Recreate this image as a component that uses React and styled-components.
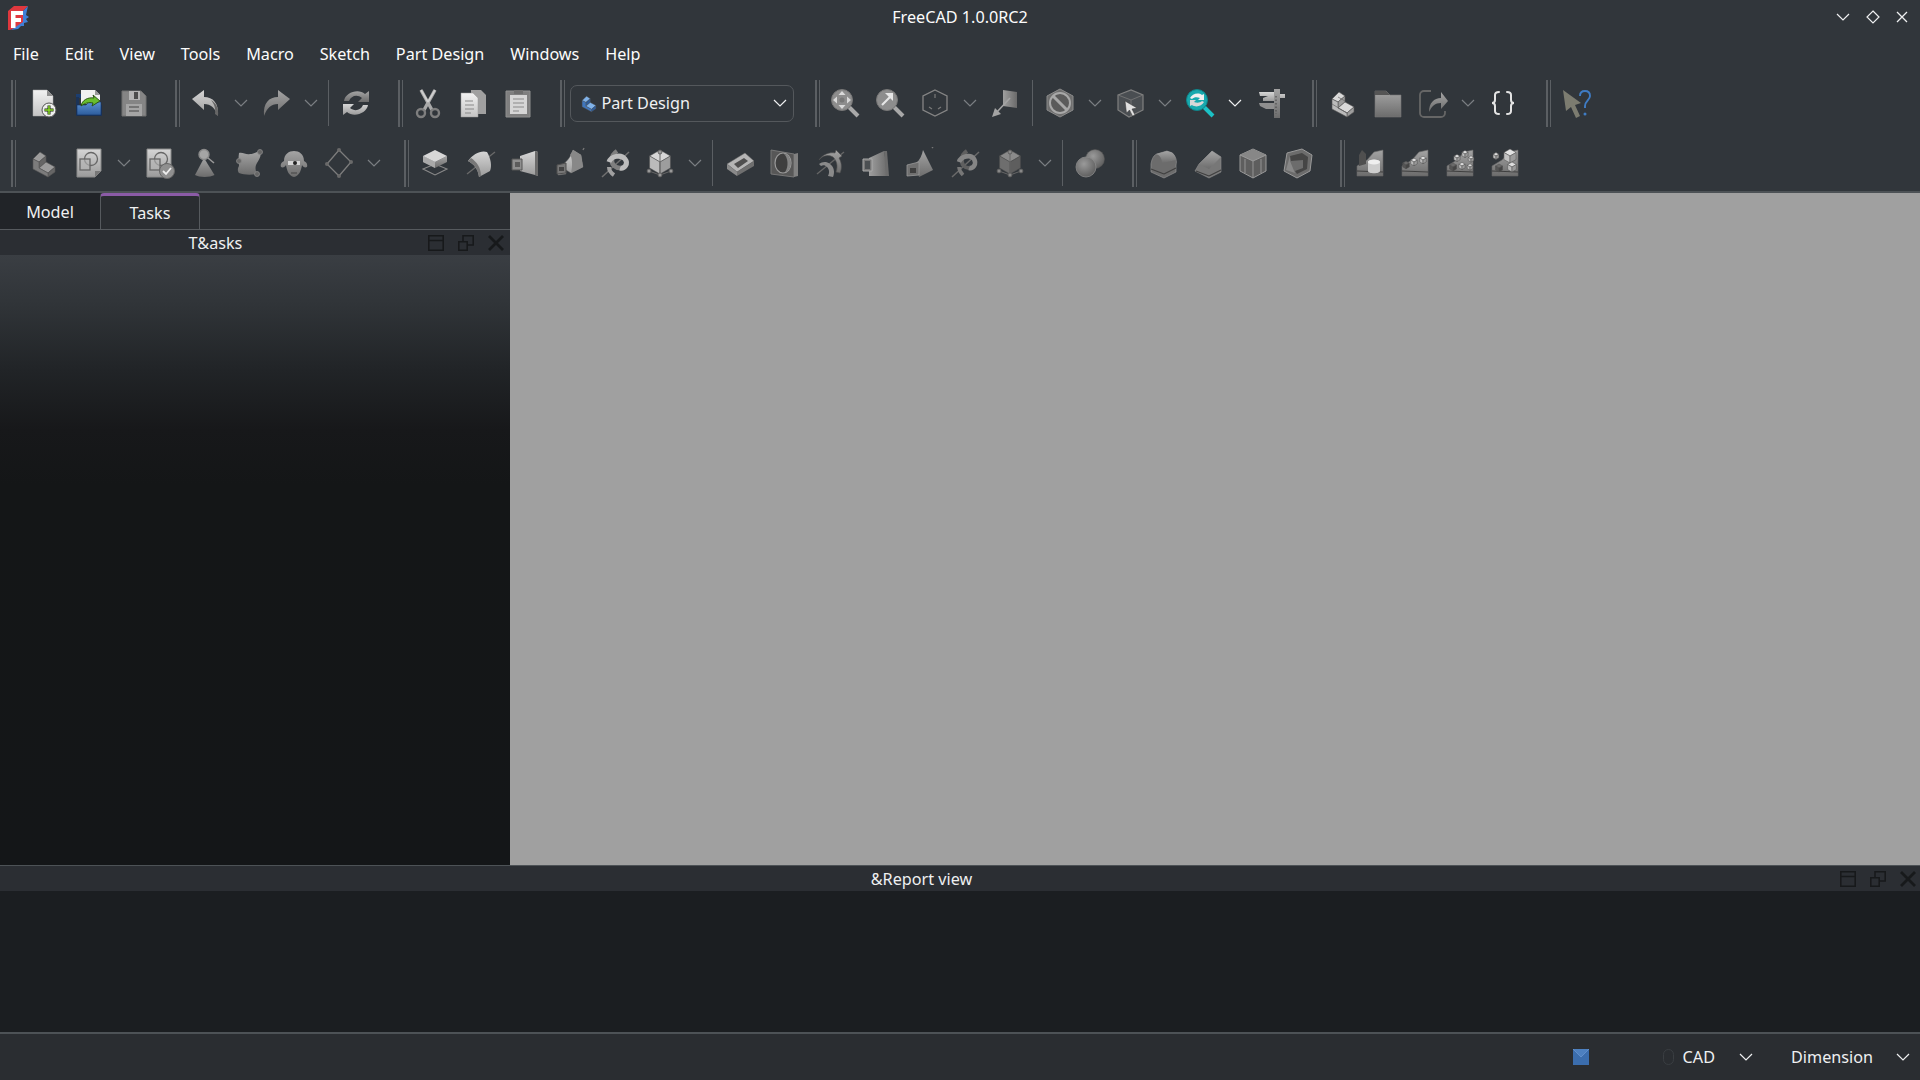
import React from "react";
import styled, { createGlobalStyle } from "styled-components";

const GlobalStyle = createGlobalStyle`
    html, body {
        margin: 0;
        width: 1920px;
        height: 1080px;
        overflow: hidden;
        background: #31363b;
    }
    body, button {
        font-family: "Noto Sans", "Open Sans", sans-serif;
        font-size: 16.2px;
        color: #eff0f1;
    }
`;

const AppWindow = styled.div`
    display: flex;
    flex-direction: column;
    width: 1920px;
    height: 1080px;
    background: #31363b;
`;

const TitleBar = styled.div`
    display: grid;
    grid-template-columns: 1fr auto 1fr;
    align-items: center;
    height: 34px;
    flex: none;
`;

const Logo = styled.svg`
    display: block;
    margin: 2px 0 0 6px;
`;

const WindowButtons = styled.div`
    display: flex;
    justify-content: flex-end;
    align-items: center;
    gap: 16px;
    padding-right: 12px;
    color: #eff0f1;
`;

const Title = styled.div`
    color: #fcfcfc;
`;

const MenuBar = styled.div`
    display: flex;
    align-items: center;
    height: 39px;
    flex: none;
`;

const MenuItem = styled.div`
    padding: 0 12.95px;
    color: #fcfcfc;
`;

const ToolArea = styled.div`
    flex: none;
    height: 120px;
    border-bottom: 2px solid #4d5256;
    box-sizing: border-box;
`;

const ToolRow = styled.div`
    display: flex;
    align-items: center;
    height: ${(p) => p.$height}px;
    padding-left: 11px;
    box-sizing: border-box;
    padding-top: ${(p) => p.$top || 0}px;
`;

const Grip = styled.div`
    flex: none;
    box-sizing: border-box;
    width: 5px;
    height: 47px;
    margin: 0 ${(p) => p.$mr}px 0 ${(p) => p.$ml}px;
    border-left: 2px solid #5b5f63;
    border-right: 1px solid #5b5f63;
`;

const ThinSep = styled.div`
    flex: none;
    width: 1px;
    height: 46px;
    margin: 0 4.5px;
    background: #5b5f63;
`;

const ToolButton = styled.div`
    flex: none;
    display: flex;
    justify-content: center;
    align-items: center;
    width: 45px;
    height: 45px;
`;

const ArrowButton = styled.div`
    flex: none;
    display: flex;
    justify-content: center;
    align-items: center;
    width: 25px;
    color: ${(p) => (p.$bright ? "#eff0f1" : "#7b7f83")};
`;

const Combo = styled.div`
    flex: none;
    display: flex;
    align-items: center;
    box-sizing: border-box;
    width: 224px;
    height: 37px;
    padding: 0 6px 0 8px;
    gap: 3px;
    border: 1px solid #54585c;
    border-radius: 7px;
`;

const ComboLabel = styled.span`
    flex: 1;
`;

const Main = styled.div`
    display: flex;
    flex: none;
    height: 672px;
`;

const LeftPanel = styled.div`
    display: flex;
    flex-direction: column;
    flex: none;
    width: 510px;
    background: #2a2d31;
`;

const TabBar = styled.div`
    display: flex;
    flex: none;
    height: 37px;
    box-sizing: border-box;
    border-bottom: 1px solid #565a5e;
`;

const Tab = styled.div`
    display: flex;
    justify-content: center;
    align-items: center;
    box-sizing: border-box;
    width: 100px;
    height: 36px;
    padding-top: ${(p) => (p.$active ? 0 : 2)}px;
    background: ${(p) => (p.$active ? "#2a2d31" : "#212428")};
    ${(p) =>
        p.$active &&
        `border: 1px solid #565a5e;
         border-top: 3px solid #8b5ba6;
         border-bottom: none;
         border-radius: 4px 4px 0 0;`}
`;

const DockHeader = styled.div`
    display: flex;
    align-items: center;
    flex: none;
    height: 25px;
    background: #2b2e33;
`;

const DockTitle = styled.div`
    flex: 1;
    padding-left: 3px;
    text-align: center;
`;

const DockButtons = styled.div`
    display: flex;
    align-items: center;
    gap: 14px;
    padding-right: ${(p) => p.$inset}px;
    color: #17191b;
`;

const TaskBody = styled.div`
    flex: 1;
    background: linear-gradient(#3a3e43 0, #303438 50px, #212427 115px, #17181a 175px, #141617 230px, #141618 100%);
`;

const Viewport = styled.div`
    flex: 1;
    background: #a0a0a0;
`;

const ReportBody = styled.div`
    flex: none;
    height: 141px;
    background: #1b1e21;
`;

const ReportPanel = styled.div`
    flex: none;
    border-top: 1px solid #4d5256;
`;

const StatusBar = styled.div`
    display: flex;
    align-items: center;
    justify-content: flex-end;
    flex: 1;
    padding-right: 10px;
    background: #2a2d31;
    border-top: 2px solid #4d5256;
    color: #eff0f1;
`;

const StatusSwatch = styled.svg`
    display: block;
    margin-right: 74px;
`;

const MouseIcon = styled.div`
    width: 11px;
    height: 16px;
    margin-right: 9px;
    box-sizing: border-box;
    border: 1px solid #3a3e42;
    border-radius: 6px;
`;

const StatusChevron = styled.div`
    display: flex;
    justify-content: center;
    width: 14px;
    margin: 0 ${(p) => p.$right}px 0 ${(p) => p.$left}px;
`;

const Chevron = () => (
    <svg width="14" height="8" viewBox="0 0 14 8" fill="none" stroke="currentColor" strokeWidth="1.2">
        <path d="M1 1l6 6 6-6" />
    </svg>
);

const Defs = styled.svg`
    display: block;
    width: 0;
    height: 0;
`;

const grad = (id, a, b, horizontal) => (
    <linearGradient id={id} x1="0" y1="0" x2={horizontal ? "1" : "0"} y2={horizontal ? "0" : "1"}>
        <stop offset="0" stopColor={a} />
        <stop offset="1" stopColor={b} />
    </linearGradient>
);

const SharedDefs = () => (
    <Defs>
        <defs>
            {grad("gw", "#f2f2f2", "#c4c4c4")}
            {grad("gl", "#d6d6d6", "#9a9a9a")}
            {grad("gm", "#a4a4a4", "#6c6c6c")}
            {grad("gd", "#7c7c7c", "#4e4e4e")}
            {grad("gh", "#9f9f9f", "#6a6a6a", true)}
            {grad("gb", "#5d92d2", "#2c5c9c")}
            <radialGradient id="gs" cx="0.4" cy="0.35" r="0.7">
                <stop offset="0" stopColor="#9a9a9a" />
                <stop offset="1" stopColor="#5c5c5c" />
            </radialGradient>
        </defs>
    </Defs>
);

const I = ({ children, size = 32 }) => (
    <svg width={size} height={size} viewBox="0 0 32 32" fill="none">
        {children}
    </svg>
);

const cube = (cx, cy, s, top = "#cfcfcf", left = "#9b9b9b", right = "#737373") => {
    const w = s * 0.87;
    const h = s / 2;
    return (
        <g stroke="#4f4f4f" strokeWidth="0.5">
            <path d={`M${cx} ${cy - s}L${cx + w} ${cy - h}L${cx} ${cy}L${cx - w} ${cy - h}z`} fill={top} />
            <path d={`M${cx - w} ${cy - h}L${cx} ${cy}V${cy + s}L${cx - w} ${cy + h}z`} fill={left} />
            <path d={`M${cx} ${cy}L${cx + w} ${cy - h}V${cy + h}L${cx} ${cy + s}z`} fill={right} />
        </g>
    );
};

const stairs = (top, left, right) => (
    <g stroke="#555" strokeWidth="0.6" strokeLinejoin="round">
        <path d="M5 12l7-7 6 4-7 6z" fill={top} />
        <path d="M11 15l7-6v6l-7 6z" fill={right} />
        <path d="M11 21l7-6 9 5-7 6z" fill={top} />
        <path d="M20 26l7-6v5l-7 5z" fill={right} />
        <path d="M5 12l6 3v6l9 5v4L5 22z" fill={left} />
    </g>
);

const sketchPage = (
    <g>
        <path d="M4 2h24v22l-6 6H4z" fill="url(#gl)" stroke="#8a8a8a" />
        <path d="M22 30v-6h6z" fill="#777" />
        <circle cx="18" cy="12" r="6.5" stroke="#666" strokeWidth="1.3" />
        <rect x="7" y="12" width="10" height="11" fill="#b4b4b4" fillOpacity="0.6" stroke="#666" strokeWidth="1.3" />
    </g>
);

const pointedCube = (top, left, right, dot) => (
    <g>
        {cube(16, 15, 12, top, left, right)}
        <path d="M16 5v21M5 24l11 4 11-4" stroke="#666" strokeWidth="1" />
        <g fill={dot} stroke="#555" strokeWidth="0.8">
            <circle cx="16" cy="5" r="2" />
            <circle cx="5" cy="24" r="2" />
            <circle cx="16" cy="28" r="2" />
            <circle cx="27" cy="24" r="2" />
        </g>
    </g>
);

const ramp = (
    <g>
        <path d="M3 19L13 13 20 5 29 3V29H3z" fill="url(#gm)" stroke="#666" strokeWidth="0.6" />
        <path d="M3 24l26 1" stroke="#3f3f3f" strokeWidth="1" />
    </g>
);

const icons = {
    new: (
        <I>
            <path d="M5 3h14l6 6v20H5z" fill="url(#gw)" stroke="#aaa" strokeWidth="0.5" />
            <path d="M19 3v6h6z" fill="#8f8f8f" />
            <circle cx="21" cy="23" r="7" fill="#eee" stroke="#555" />
            <path d="M21 18.5v9M16.5 23h9" stroke="#1d2a10" strokeWidth="3" />
            <path d="M21 18.8v8.4M16.8 23h8.4" stroke="#8bdc2a" strokeWidth="1.5" />
        </I>
    ),
    open: (
        <I>
            <path d="M3 7h5v4H3z" fill="#1c3e70" />
            <path d="M8 3h14l5 5v9H8z" fill="#f1f1f1" />
            <path d="M22 3v5h5z" fill="#9a9a9a" />
            <path d="M3 10h3v8h23v-8v19H3z" fill="#1c3356" />
            <path d="M4 18h9l3-3h12v13H4z" fill="url(#gb)" stroke="#15305a" strokeWidth="0.6" />
            <path d="M8 19c1-6 7-9 13-8l-1-3 7 6-8 5 1-3c-4-1-8 0-12 3z" fill="#69bd2e" stroke="#244d10" strokeWidth="0.9" />
        </I>
    ),
    save: (
        <I>
            <path d="M4 4h19l5 5v20H4z" fill="#858585" stroke="#707070" />
            <path d="M11 4h11v9H11z" fill="#b5b5b5" />
            <path d="M16 5h4v7h-4z" fill="#4d4d4d" />
            <path d="M8 17h16v12H8z" fill="#a5a5a5" />
            <path d="M11 20h10M11 24h10" stroke="#666" strokeWidth="1.4" />
        </I>
    ),
    undo: (
        <I>
            <path d="M2 12L14 3v7c9 0 15 6 14 19-3-8-7-12-14-12v6z" fill="url(#gl)" />
            <path d="M28 29c1-8-2-13-7-16 3 4 5 8 4 14z" fill="#666" />
        </I>
    ),
    redo: (
        <I>
            <g transform="matrix(-1 0 0 1 32 0)">
                <path d="M2 12L14 3v7c9 0 15 6 14 19-3-8-7-12-14-12v6z" fill="url(#gm)" />
            </g>
        </I>
    ),
    refresh: (
        <I>
            <path d="M4 14C5 6 18 1 25 7l4-3v11H18l4-4c-5-4-11-2-13 3z" fill="url(#gm)" />
            <path d="M28 18c-1 8-14 13-21 7l-4 3V17h11l-4 4c5 4 11 2 13-3z" fill="url(#gl)" />
        </I>
    ),
    cut: (
        <I>
            <path d="M9 3l11 20M23 3L12 23" stroke="#a9a9a9" strokeWidth="3.4" />
            <path d="M9 3l7 12M23 3l-7 12" stroke="#cfcfcf" strokeWidth="1.6" />
            <circle cx="9" cy="26" r="4" stroke="#7f7f7f" strokeWidth="2.4" />
            <circle cx="23" cy="26" r="4" stroke="#7f7f7f" strokeWidth="2.4" />
        </I>
    ),
    copy: (
        <I>
            <path d="M14 3h10l5 5v19H14z" fill="#a0a0a0" />
            <path d="M4 6h12l5 5v19H4z" fill="url(#gw)" stroke="#999" strokeWidth="0.5" />
            <path d="M8 14h8M8 18h9M8 22h9M8 26h6" stroke="#8a8a8a" strokeWidth="1.1" />
        </I>
    ),
    paste: (
        <I>
            <path d="M4 4h24v26H4z" fill="#7f7f7f" stroke="#8f8f8f" />
            <path d="M8 8h17v19H8z" fill="#d6d6d6" />
            <path d="M12 3h9v4h-9z" fill="#6d6d6d" />
            <path d="M11 12h11M11 16h11M11 20h11M11 24h6" stroke="#8a8a8a" strokeWidth="1.1" />
        </I>
    ),
    zoomfit: (
        <I>
            <path d="M20 20l9 9" stroke="#a8a8a8" strokeWidth="4" />
            <circle cx="13" cy="13" r="10.5" fill="#8d8d8d" stroke="#777" />
            <path d="M13 4l3.5 4h-7zM13 22l3.5-4h-7zM4 13l4-3.5v7zM22 13l-4-3.5v7z" fill="#d9d9d9" />
            <circle cx="13" cy="13" r="2.5" fill="#777" />
        </I>
    ),
    zoomsel: (
        <I>
            <path d="M20 20l9 9" stroke="#a8a8a8" strokeWidth="4" />
            <circle cx="13" cy="13" r="10.5" fill="#8d8d8d" stroke="#777" />
            <path d="M8 18L17 9" stroke="#e6e6e6" strokeWidth="2.2" />
            <path d="M19 6v8l-8-8z" fill="#e6e6e6" />
        </I>
    ),
    cubeview: (
        <I>
            <path d="M16 3l12 6v14l-12 6-12-6V9z" stroke="#858585" strokeWidth="1.3" />
            <path d="M16 7v4M10 20l3 2M22 20l-3 2" stroke="#7a7a7a" strokeWidth="1.2" />
        </I>
    ),
    plane: (
        <I>
            <path d="M14 3l14 2v16L14 19z" fill="url(#gh)" />
            <path d="M21 11L7 26" stroke="#a4a4a4" strokeWidth="1.6" />
            <path d="M3 30l9-3-6-6z" fill="#a4a4a4" />
        </I>
    ),
    noshade: (
        <I>
            <path d="M16 2l13 7v14l-13 7-13-7V9z" fill="#6f6f6f" stroke="#8b8b8b" />
            <circle cx="16" cy="16" r="10" fill="#5b5b5b" stroke="#a8a8a8" strokeWidth="2" />
            <path d="M9 9l14 14" stroke="#a8a8a8" strokeWidth="3" />
        </I>
    ),
    cubecursor: (
        <I>
            <path d="M4 8l13-5 12 5v15l-14 7-11-7z" fill="#4a4e52" stroke="#808080" strokeWidth="1.2" />
            <path d="M4 8l13 5 12-5M17 13v17" stroke="#747474" strokeWidth="0.9" />
            <path d="M11 14l12 7-5 1 3 6-2.500 1-3-6-3 3z" fill="#e0e0e0" stroke="#333" strokeWidth="0.5" />
        </I>
    ),
    teal: (
        <I>
            <path d="M20 20l9 9" stroke="#1cc1c5" strokeWidth="4" />
            <circle cx="13" cy="13" r="10.5" fill="#18a9ae" stroke="#0e8489" />
            <path d="M6 11c2-4 8-6 12-3l2-1v6h-6l2-2c-3-1-6-1-8 1z" fill="#f0f0f0" />
            <path d="M20 15c-2 4-8 6-12 3l-2 1v-6h6l-2 2c3 1 6 1 8-1z" fill="#d8d8d8" />
        </I>
    ),
    caliper: (
        <I>
            <path d="M5 5h20v2h6v4h-6v3H9v-3l5-2H6z" fill="url(#gl)" />
            <path d="M20 2h6v29h-6z" fill="url(#gm)" />
            <path d="M5 16h15v6H12l-6-3z" fill="#8f8f8f" />
            <path d="M22 9v18" stroke="#444" strokeWidth="1" strokeDasharray="1.5 2" />
        </I>
    ),
    stack: (
        <I>
            {stairs("#d9d9d9", "#bbb", "#9d9d9d")}
            <path d="M5 17l15 9M11 10l7 4" stroke="#666" strokeWidth="0.7" />
        </I>
    ),
    folder: (
        <I>
            <path d="M3 4h11l4 4h11v22H3z" fill="url(#gm)" stroke="#777" strokeWidth="0.6" />
            <path d="M3 4h11l4 4H3z" fill="#555" />
        </I>
    ),
    share: (
        <I>
            <path d="M14 4H7a4 4 0 0 0-4 4v18a4 4 0 0 0 4 4h17a4 4 0 0 0 4-4v-2" stroke="#666" strokeWidth="1.8" />
            <path d="M12 25c0-9 5-14 12-14V5l7 9-7 8v-6c-6 0-9 3-12 9z" fill="url(#gm)" />
        </I>
    ),
    braces: (
        <I>
            <g stroke="#e4e4e4" strokeWidth="2" strokeLinecap="round">
                <path d="M12 5c-3 0-4 1-4 3v5c0 2-1 3-3 3 2 0 3 1 3 3v5c0 2 1 3 4 3" />
                <path d="M20 5c3 0 4 1 4 3v5c0 2 1 3 3 3-2 0-3 1-3 3v5c0 2-1 3-4 3" />
            </g>
        </I>
    ),
    help: (
        <I>
            <path d="M3 3l18 13-6 2 5 11-4 2-5-11-5 4z" fill="#7c7c70" />
            <path d="M20 9c0-3 2-5 5-5s5 2 5 5c0 4-5 5-5 10v2" stroke="#3f7cc4" strokeWidth="1.9" />
            <circle cx="25" cy="27" r="1.5" fill="#3f7cc4" />
        </I>
    ),
    body: <I>{stairs("#9c9c9c", "#7c7c7c", "#666")}</I>,
    sketch: <I>{sketchPage}</I>,
    sketchok: (
        <I>
            {sketchPage}
            <circle cx="24" cy="24" r="7.5" fill="#8f8f8f" stroke="#666" />
            <path d="M20 24l3 3 5-6" stroke="#eee" strokeWidth="1.8" />
        </I>
    ),
    pawn: (
        <I>
            <path d="M16 11L7 28c4 2.500 15 2.500 19.500 0z" fill="url(#gm)" />
            <circle cx="16" cy="7.500" r="5" fill="#a5a5a5" stroke="#8a8a8a" strokeWidth="1.400" />
            <path d="M20 11l6 5" stroke="#999" strokeWidth="1.600" />
        </I>
    ),
    surface: (
        <I>
            <path d="M6 6c4-1 7 2 11 1 4 0 7-3 10-2 2 3-1 8-3 11-2 3-2 7 0 11-6 1-13 1-18-1-2-3-1-5 0-7 0-3-1-6 0-13z" fill="url(#gm)" />
            <g fill="#666" stroke="#888" strokeWidth="0.8">
                <circle cx="27" cy="5" r="2.500" />
                <circle cx="6" cy="14" r="2.500" />
                <circle cx="24" cy="27" r="2.500" />
            </g>
        </I>
    ),
    sheep: (
        <I>
            <path d="M6 14c0-7 5-10 10-10s10 3 10 10c2 1 4 3 3 6-2 1-4 0-5-2-1 6-3 11-8 12-5-1-7-6-8-12-1 2-3 3-5 2-1-3 1-5 3-6z" fill="url(#gm)" />
            <path d="M10 14h12v4H10z" fill="#d4d4d4" />
            <circle cx="17" cy="16" r="2" fill="#222" />
            <path d="M13 26h6" stroke="#444" strokeWidth="1" />
        </I>
    ),
    diamond: (
        <I>
            <path d="M16 3l12 12-12 14L4 17z" stroke="#7d7d7d" strokeWidth="1.3" />
            <g fill="#6a6a6a">
                <circle cx="16" cy="3" r="2" />
                <circle cx="28" cy="15" r="2" />
                <circle cx="16" cy="29" r="2" />
                <circle cx="4" cy="17" r="2" />
            </g>
        </I>
    ),
    pad: (
        <I>
            <path d="M4 22l12-5 12 5-12 6z" stroke="#8a8a8a" strokeWidth="1.1" />
            <path d="M4 15l12 6 12-6v-6L16 15 4 9z" fill="url(#gm)" />
            <path d="M16 15v6L4 15V9z" fill="#a9a9a9" />
            <path d="M16 3L28 9l-12 6L4 9z" fill="#d7d7d7" />
        </I>
    ),
    revolve: (
        <I>
            <path d="M3 27L31 5" stroke="#6a6a6a" strokeWidth="1.3" />
            <path d="M4 14C9 7 17 3 23 5c4 7 5 14 3 19l-11 6C14 22 10 17 4 14z" fill="url(#gl)" />
            <path d="M15 30c-1-8-5-13-11-16l3-3c6 4 10 10 10 18z" fill="#777" />
        </I>
    ),
    loft: (
        <I>
            <path d="M11 9L26 4l3 1v24l-3-1-15-4z" fill="url(#gl)" />
            <path d="M26 4l3 1v24l-3-1z" fill="#6b6b6b" />
            <path d="M3 12h10v11H3z" fill="#8f8f8f" stroke="#555" />
            <path d="M6 15h5v5H6z" fill="#5c5c5c" />
        </I>
    ),
    pipe: (
        <I>
            <path d="M8 18C14 14 17 9 19 3l8 5 2 12-12 6-5-3v4l-8 1V19z" fill="url(#gl)" stroke="#666" strokeWidth="0.5" />
            <path d="M19 3l8 5 2 12-12 6c2-8 1-16-1-18z" fill="#888" />
            <path d="M3 18l9-2v10l-9 1z" fill="#777" stroke="#4f4f4f" />
            <path d="M5 20h5v4H5z" fill="#444" />
            <path d="M29 3l1-2" stroke="#777" strokeWidth="1.4" />
        </I>
    ),
    helix: (
        <I>
            <path d="M3 30L30 5" stroke="#707070" strokeWidth="1.5" />
            <path d="M21 21c-4 0-9-3-8-9 0-3 2-6 5-8" stroke="#7f7f7f" strokeWidth="4.5" />
            <path d="M10 15c2-6 12-8 16-3s-1 10-5 9" stroke="#bdbdbd" strokeWidth="5" />
            <path d="M10 20c0 3 2 6 5 8" stroke="#a0a0a0" strokeWidth="4" />
        </I>
    ),
    addbox: <I>{pointedCube("#d6d6d6", "#bbb", "#9d9d9d", "#999")}</I>,
    pocket: (
        <I>
            <path d="M3 17L21 6l9 8-17 11z" fill="#b5b5b5" stroke="#666" strokeWidth="0.5" />
            <path d="M10 17l10-6 4 3-10 7z" fill="#4f4f4f" />
            <path d="M3 17l10 8v4L3 22z" fill="#8a8a8a" />
            <path d="M13 25l17-11v5L13 29z" fill="#6f6f6f" />
        </I>
    ),
    hole: (
        <I>
            <path d="M2 3l23 4v23L2 27z" fill="#575757" stroke="#777" />
            <path d="M25 7l4-1v23l-4 1z" fill="#808080" />
            <ellipse cx="14" cy="16" rx="8" ry="10" fill="#3f3f3f" stroke="#9a9a9a" strokeWidth="1.2" />
            <path d="M15 7c4 3 5 13 1 18 3 0 6-5 6-9s-3-9-7-9z" fill="#848484" />
        </I>
    ),
    groove: (
        <I>
            <path d="M3 27l27-22" stroke="#666" strokeWidth="1.3" />
            <path d="M5 13C9 7 16 5 21 6l1-3 6 6-3 2c3 5 3 11 1 15l-4-1c2-6 1-11-3-15-4-2-8-2-12 1z" fill="url(#gm)" stroke="#4f4f4f" strokeWidth="0.6" />
            <path d="M5 17c3-2 7-3 11 0s5 8 3 13l-5-1c2-4 1-7-1-9s-4-2-6-1z" fill="#8a8a8a" />
        </I>
    ),
    subloft: (
        <I>
            <path d="M10 11L25 4l4 25H10z" fill="url(#gh)" />
            <path d="M25 4h3l2 25h-3z" fill="#6c6c6c" />
            <path d="M4 12h9v12H4z" fill="#777" stroke="#aaa" />
            <path d="M6 14h5v8H6z" fill="#4b4f52" />
        </I>
    ),
    subpipe: (
        <I>
            <path d="M12 16C16 13 18 8 19 3l10 20-14 7z" fill="url(#gm)" />
            <path d="M3 18l12-3v13l-12 1z" fill="#707070" stroke="#999" strokeWidth="0.8" />
            <path d="M6 21h6v5H6z" fill="#3f3f3f" />
            <path d="M28 1l1-1" stroke="#777" strokeWidth="1.4" />
        </I>
    ),
    subhelix: (
        <I>
            <path d="M3 30L30 5" stroke="#6a6a6a" strokeWidth="1.5" />
            <path d="M20 21c-4 0-8-3-7-9 0-3 2-6 5-8" stroke="#5f5f5f" strokeWidth="4" />
            <path d="M10 15c2-6 12-8 15-3s-1 10-5 9" stroke="#858585" strokeWidth="4.6" />
            <path d="M10 20c0 3 2 6 4 8" stroke="#777" strokeWidth="3.6" />
        </I>
    ),
    subbox: <I>{pointedCube("#8a8a8a", "#6e6e6e", "#5e5e5e", "#888")}</I>,
    boolean: (
        <I>
            <circle cx="21" cy="12" r="9.5" fill="url(#gs)" stroke="#555" strokeWidth="0.5" />
            <circle cx="12" cy="20" r="10" fill="url(#gs)" stroke="#8a8a8a" strokeWidth="0.8" />
        </I>
    ),
    fillet: (
        <I>
            <path d="M4 25v-8c1-6 3-9 6-10l10-3 6 3c3 3 4 7 3 11v7l-12 6z" fill="#6c6c6c" stroke="#8f8f8f" strokeWidth="0.7" />
            <path d="M20 4l-11 3c4 1 6 5 6 9l14-3c0-3-2-7-5-8z" fill="url(#gm)" />
            <path d="M4 22l13 5M17 27l12-6" stroke="#3f3f3f" strokeWidth="1.1" />
        </I>
    ),
    chamfer: (
        <I>
            <path d="M3 24l4-7L20 4l9 6v15l-12 6z" fill="#777" stroke="#8f8f8f" strokeWidth="0.6" />
            <path d="M20 4L7 17l10 5 12-12z" fill="url(#gm)" />
            <path d="M4 24l13 5M17 29l12-6" stroke="#3f3f3f" strokeWidth="1.1" />
        </I>
    ),
    thickness: (
        <I>
            <path d="M16 2L29 8v16l-13 7-13-7V8z" fill="#5e5e5e" stroke="#9a9a9a" />
            <path d="M16 2L29 8 16 14 3 8z" fill="#878787" />
            <path d="M3 8l13 6 13-6" stroke="#9a9a9a" />
            <path d="M16 14v17M8 12v14M24 12v14" stroke="#9a9a9a" strokeWidth="0.9" />
        </I>
    ),
    draft: (
        <I>
            <path d="M5 6L20 2l10 6-2 16-13 7L2 24z" fill="#6c6c6c" stroke="#9a9a9a" />
            <path d="M8 9l12-3 6 4-1 12-10 5-2-3 8-3V13l-12 1z" fill="#454545" />
            <path d="M13 26L4 23l4-14v5z" fill="#888" />
        </I>
    ),
    patternA: (
        <I>
            {ramp}
            <path d="M5 19V8l3-5 4 4v10z" fill="#4f4f4f" />
            <path d="M14 15c0-3 12-3 12 0v9c0 3-12 3-12 0z" fill="#cdcdcd" />
            <ellipse cx="20" cy="15" rx="6" ry="2.500" fill="#efefef" />
        </I>
    ),
    patternB: (
        <I>
            {ramp}
            {cube(7, 18, 3.8, "#6a6a6a", "#555", "#444")}
            {cube(15, 15, 3.8, "#ddd", "#bbb", "#999")}
            {cube(24, 13, 3.8, "#ddd", "#bbb", "#999")}
        </I>
    ),
    patternC: (
        <I>
            {ramp}
            {cube(9, 20, 4, "#6a6a6a", "#555", "#444")}
            {cube(13, 11, 3.6, "#ddd", "#bbb", "#999")}
            {cube(21, 7, 3.6, "#ddd", "#bbb", "#999")}
            {cube(27, 12, 3.2, "#ddd", "#bbb", "#999")}
            {cube(18, 19, 3.6, "#ddd", "#bbb", "#999")}
            {cube(26, 20, 3.2, "#ddd", "#bbb", "#999")}
        </I>
    ),
    patternD: (
        <I>
            {ramp}
            {cube(7, 9, 3.4, "#ddd", "#bbb", "#999")}
            {cube(21, 9, 7, "#e2e2e2", "#c2c2c2", "#9c9c9c")}
            {cube(10, 21, 4, "#6a6a6a", "#555", "#444")}
            {cube(23, 20, 5, "#ddd", "#bbb", "#999")}
        </I>
    ),
};

const g = (ml, mr) => ({ grip: [ml, mr] });

const rowOne = [
    g(0, 5.5), "new", "open", "save", g(18, 3.5), "undo", "a", "redo", "a", "s", "refresh",
    g(19.5, 2.5), "cut", "copy", "paste", g(19.5, 5), "combo", g(21, 2.5),
    "zoomfit", "zoomsel", "cubeview", "a", "plane", "s", "noshade", "a", "cubecursor", "a",
    "teal", "A", "caliper", g(19.5, 3.5), "stack", "folder", "share", "a", "braces", g(20.5, 2.5), "help",
];

const rowTwo = [
    g(0, 5), "body", "sketch", "a", "sketchok", "pawn", "surface", "sheep", "diamond", "a",
    g(18, 3.5), "pad", "revolve", "loft", "pipe", "helix", "addbox", "a", "s",
    "pocket", "hole", "groove", "subloft", "subpipe", "subhelix", "subbox", "a", "s",
    "boolean", g(19.5, 3.5), "fillet", "chamfer", "thickness", "draft",
    g(19.5, 2.5), "patternA", "patternB", "patternC", "patternD",
];

const ComboIcon = () => (
    <I size={20}>
        {stairs("#7fb2ea", "#3f76bd", "#2c5c9c")}
    </I>
);

const renderTool = (item, i) => {
    if (item.grip) return <Grip key={i} $ml={item.grip[0]} $mr={item.grip[1]} />;
    if (item === "s") return <ThinSep key={i} />;
    if (item === "a" || item === "A")
        return (
            <ArrowButton key={i} $bright={item === "A"}>
                <Chevron />
            </ArrowButton>
        );
    if (item === "combo")
        return (
            <Combo key={i}>
                <ComboIcon />
                <ComboLabel>Part Design</ComboLabel>
                <Chevron />
            </Combo>
        );
    return <ToolButton key={i}>{icons[item]}</ToolButton>;
};

const DockIcons = ({ inset }) => (
    <DockButtons $inset={inset}>
        <svg width="16" height="16" viewBox="0 0 16 16" fill="none" stroke="currentColor" strokeWidth="1.5">
            <path d="M.8.8h14.4v14.4H.8zM.8 5.5h14.4" />
        </svg>
        <svg width="16" height="16" viewBox="0 0 16 16" fill="none" stroke="currentColor" strokeWidth="1.5">
            <path d="M.8 6.800h8.400v8.400H.8zM5 6.500V.8h10.200V10H9.500" />
        </svg>
        <svg width="16" height="16" viewBox="0 0 16 16" fill="none" stroke="currentColor" strokeWidth="2.8">
            <path d="M1 1l14 14M15 1L1 15" />
        </svg>
    </DockButtons>
);

const menus = ["File", "Edit", "View", "Tools", "Macro", "Sketch", "Part Design", "Windows", "Help"];

const App = () => {
    return (
        <AppWindow>
            <GlobalStyle />
            <SharedDefs />
            <TitleBar>
                <Logo width="24" height="26" viewBox="0 0 24 26">
                    <path d="M2 6l6-5h14l-5 5v14L4 25H2z" fill="#e0383e" />
                    <path d="M22 1l-2 9 3 2-3 2 2 3-4 1v3l-3 0-3 3-7 1 12-8V6z" fill="#3f7fd6" />
                    <path d="M5 6h12v4H9.500v3H15v4H9.500v6H5z" fill="#fff" />
                </Logo>
                <Title>FreeCAD 1.0.0RC2</Title>
                <WindowButtons>
                    <svg width="14" height="10" viewBox="0 0 14 10" fill="none" stroke="currentColor" strokeWidth="1.2">
                        <path d="M1 2l6 6 6-6" />
                    </svg>
                    <svg width="14" height="14" viewBox="0 0 14 14" fill="none" stroke="currentColor" strokeWidth="1.2">
                        <path d="M7 1l6 6-6 6-6-6z" />
                    </svg>
                    <svg width="12" height="12" viewBox="0 0 12 12" fill="none" stroke="currentColor" strokeWidth="1.3">
                        <path d="M1 1l10 10M11 1L1 11" />
                    </svg>
                </WindowButtons>
            </TitleBar>
            <MenuBar>
                {menus.map((m) => (
                    <MenuItem key={m}>{m}</MenuItem>
                ))}
            </MenuBar>
            <ToolArea>
                <ToolRow $height={60}>{rowOne.map(renderTool)}</ToolRow>
                <ToolRow $height={58} $top={2}>{rowTwo.map(renderTool)}</ToolRow>
            </ToolArea>
            <Main>
                <LeftPanel>
                    <TabBar>
                        <Tab>Model</Tab>
                        <Tab $active>Tasks</Tab>
                    </TabBar>
                    <DockHeader>
                        <DockTitle>T&amp;asks</DockTitle>
                        <DockIcons inset={6} />
                    </DockHeader>
                    <TaskBody />
                </LeftPanel>
                <Viewport />
            </Main>
            <ReportPanel>
                <DockHeader>
                    <DockTitle>&amp;Report view</DockTitle>
                    <DockIcons inset={4} />
                </DockHeader>
                <ReportBody />
            </ReportPanel>
            <StatusBar>
                <StatusSwatch width="16" height="16" viewBox="0 0 16 16">
                    <rect width="16" height="16" fill="#4d80c0" />
                    <path d="M0 0l8 8 8-8v16H0z" fill="#3b6dad" />
                    <path d="M0 0l8 8 8-8" fill="none" stroke="#74a0d8" strokeWidth="0.6" />
                </StatusSwatch>
                <MouseIcon />
                <span>CAD</span>
                <StatusChevron $left={24} $right={38}><Chevron /></StatusChevron>
                <span>Dimension</span>
                <StatusChevron $left={23} $right={0}><Chevron /></StatusChevron>
            </StatusBar>
        </AppWindow>
    );
};

export default App;
